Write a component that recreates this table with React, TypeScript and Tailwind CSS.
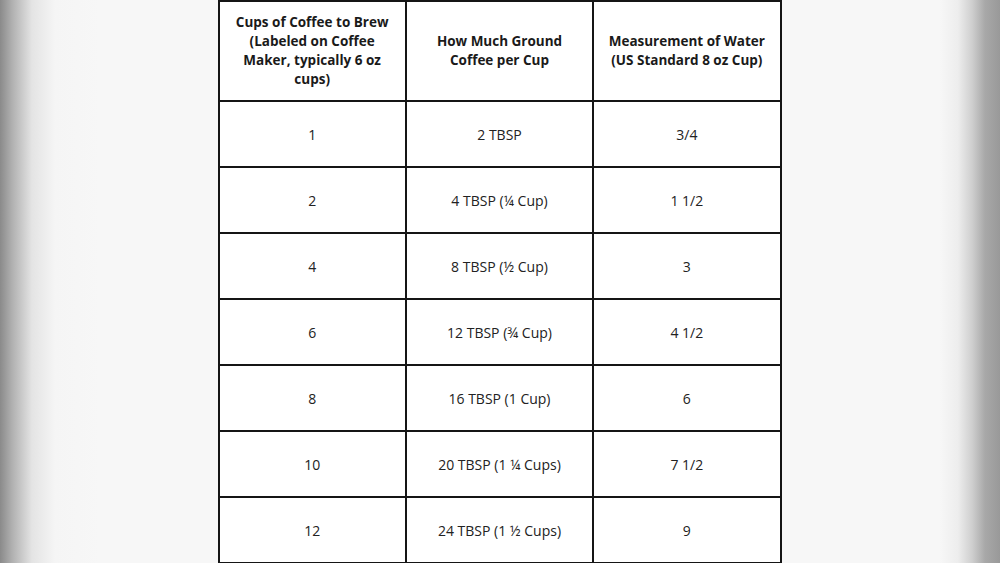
import React from "react";

const rows: [string, string, string][] = [
  ["1", "2 TBSP", "3/4"],
  ["2", "4 TBSP (¼ Cup)", "1 1/2"],
  ["4", "8 TBSP (½ Cup)", "3"],
  ["6", "12 TBSP (¾ Cup)", "4 1/2"],
  ["8", "16 TBSP (1 Cup)", "6"],
  ["10", "20 TBSP (1 ¼ Cups)", "7 1/2"],
  ["12", "24 TBSP (1 ½ Cups)", "9"],
];

export default function App() {
  return (
    <div className="w-[1000px] h-[563px] overflow-hidden flex justify-center bg-[linear-gradient(to_right,#8a8a8a_0px,#b0b0b0_12px,#e4e4e4_32px,#f5f5f5_55px,#f7f7f7_100px,#f7f7f7_940px,#ededed_958px,#cfcfcf_972px,#a8a8a8_985px,#999999_1000px)]">
      <div className="w-[564px] ml-[-1px] h-[563px] bg-white">
        <table className="w-full border-collapse border-2 border-[#151515] text-[#1a1a1a] font-['Open_Sans',sans-serif] table-fixed">
          <thead>
            <tr className="h-[100px]">
              <th className="w-1/3 border-2 border-[#151515] font-bold text-[13.5px] leading-[19px] px-3 align-middle">
                Cups of Coffee to Brew (Labeled on Coffee Maker, typically 6 oz cups)
              </th>
              <th className="w-1/3 border-2 border-[#151515] font-bold text-[13.5px] leading-[19px] px-5 align-middle">
                How Much Ground Coffee per Cup
              </th>
              <th className="w-1/3 border-2 border-[#151515] font-bold text-[13.5px] leading-[19px] px-1 align-middle">
                Measurement of Water (US Standard 8 oz Cup)
              </th>
            </tr>
          </thead>
          <tbody>
            {rows.map((r, i) => (
              <tr key={i} className="h-[66px]">
                {r.map((c, j) => (
                  <td
                    key={j}
                    className="border-2 border-[#151515] text-center text-[14px] text-[#222] align-middle"
                  >
                    {c}
                  </td>
                ))}
              </tr>
            ))}
          </tbody>
        </table>
      </div>
    </div>
  );
}
